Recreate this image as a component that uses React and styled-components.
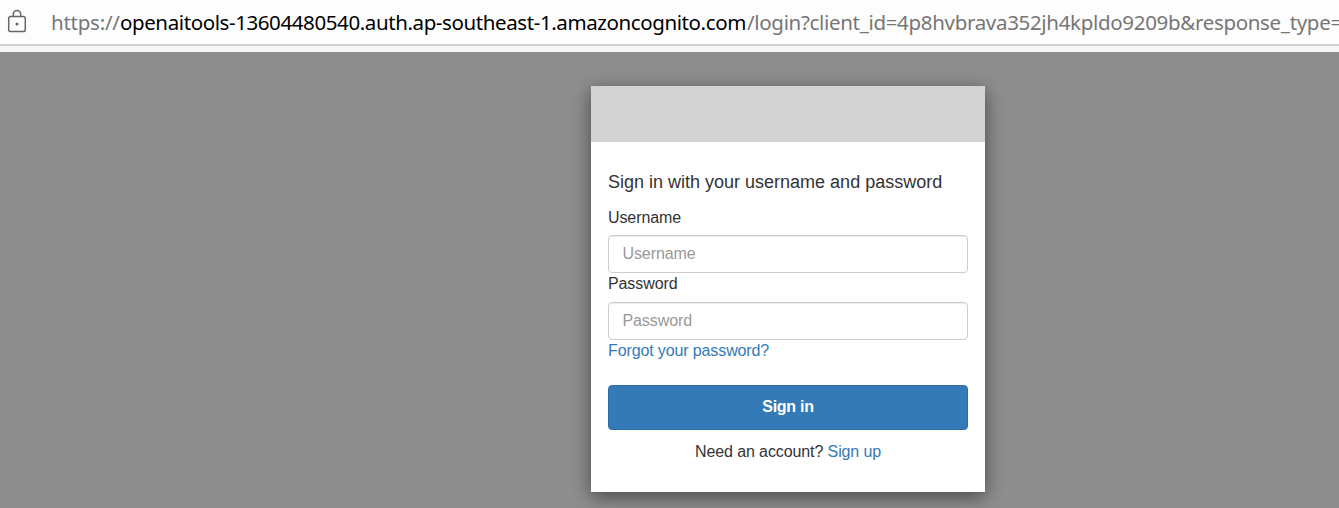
import React from "react";
import styled, { createGlobalStyle } from "styled-components";

const GlobalStyle = createGlobalStyle`
  * { box-sizing: border-box; }
  body {
    margin: 0;
    overflow: hidden;
    font-family: "Liberation Sans", Arial, sans-serif;
    font-size: 16px;
    color: #333;
  }
`;

const Window = styled.div`
  display: flex;
  flex-direction: column;
  height: 508px;
  overflow: hidden;
`;

const AddressBar = styled.header`
  display: flex;
  align-items: center;
  flex: none;
  height: 46px;
  padding: 0 0 0 7px;
  background: #fdfdfd;
  border-bottom: 2px solid #d2d2d2;
`;

const LockIcon = styled.svg`
  flex: none;
  display: block;
  width: 20px;
  height: 24px;
  margin-right: 24px;
  overflow: visible;
`;

const Url = styled.div`
  display: flex;
  white-space: pre;
  font-family: "Noto Sans", sans-serif;
  font-size: 20.5px;
  line-height: 30px;
`;

const UrlPart = styled.span`
  flex: none;
  width: ${(p) => p.$width}px;
  color: ${(p) => (p.$strong ? "#000" : "#767676")};
  letter-spacing: ${(p) => p.$spacing}px;
`;

const BarEdge = styled.div`
  flex: none;
  height: 6px;
  background: #f7f7f7;
`;

const Page = styled.main`
  flex: 1;
  padding: 34px 0 0 591px;
  background: #8e8e8e;
`;

const Card = styled.section`
  width: 394px;
  height: 406px;
  background: #fff;
  box-shadow: 0 5px 18px rgba(0, 0, 0, 0.5);
`;

const Banner = styled.div`
  height: 56px;
  background: #d3d3d3;
`;

const Form = styled.form`
  display: flex;
  flex-direction: column;
  padding: 28px 17px 0;
`;

const Title = styled.h1`
  margin: 0 0 12px;
  font-size: 18px;
  font-weight: 400;
  line-height: 24px;
`;

const Label = styled.label`
  padding-top: ${(p) => (p.$first ? 1 : 0)}px;
  height: 22px;
  line-height: 22px;
  margin-bottom: 7px;
  letter-spacing: -0.1px;
`;

const Input = styled.input`
  width: 100%;
  height: 38px;
  padding: 6px 13.5px 7px;
  font: inherit;
  color: #555;
  letter-spacing: -0.1px;
  background: #fff;
  border: 1px solid #ccc;
  border-radius: 4px;
  box-shadow: inset 0 1px 1px rgba(0, 0, 0, 0.075);
  outline: none;

  &::placeholder {
    color: #999;
    opacity: 1;
  }
`;

const Link = styled.a`
  color: #337ab7;
  text-decoration: none;
  line-height: 22px;
  letter-spacing: -0.12px;
`;

const SubmitButton = styled.button`
  height: 45px;
  margin: 23px 0 11px;
  padding: 0 0 2px;
  font: bold 16px "Liberation Sans", Arial, sans-serif;
  letter-spacing: -0.25px;
  color: #fff;
  background: #337ab7;
  border: 1px solid #2e6da4;
  border-radius: 4px;
`;

const SignUp = styled.p`
  margin: 0;
  text-align: center;
  line-height: 22px;
  letter-spacing: -0.1px;
`;

export default function App() {
  return (
    <Window>
      <GlobalStyle />
      <AddressBar>
        <LockIcon viewBox="0 0 20 24" fill="none" stroke="#666" strokeWidth="1.5">
          <rect x="1.7" y="6.4" width="16.6" height="15.2" rx="2.2" />
          <path d="M6.3 6.4V4.1a3.7 3.7 0 0 1 7.4 0v2.3" />
          <circle cx="10" cy="14" r="1.5" fill="#666" stroke="none" />
        </LockIcon>
        <Url>
          <UrlPart $width={69} $spacing={-0.25}>https://</UrlPart>
          <UrlPart $width={627} $spacing={-0.4} $strong>
            openaitools-13604480540.auth.ap-southeast-1.amazoncognito.com
          </UrlPart>
          <UrlPart $width={620} $spacing={-0.32}>
            /login?client_id=4p8hvbrava352jh4kpldo9209b&response_type=
          </UrlPart>
        </Url>
      </AddressBar>
      <BarEdge />
      <Page>
        <Card>
          <Banner />
          <Form onSubmit={(e) => e.preventDefault()}>
            <Title>Sign in with your username and password</Title>
            <Label htmlFor="username" $first>Username</Label>
            <Input id="username" placeholder="Username" />
            <Label htmlFor="password">Password</Label>
            <Input id="password" type="password" placeholder="Password" />
            <Link href="#">Forgot your password?</Link>
            <SubmitButton type="submit">Sign in</SubmitButton>
            <SignUp>
              Need an account? <Link href="#">Sign up</Link>
            </SignUp>
          </Form>
        </Card>
      </Page>
    </Window>
  );
}
